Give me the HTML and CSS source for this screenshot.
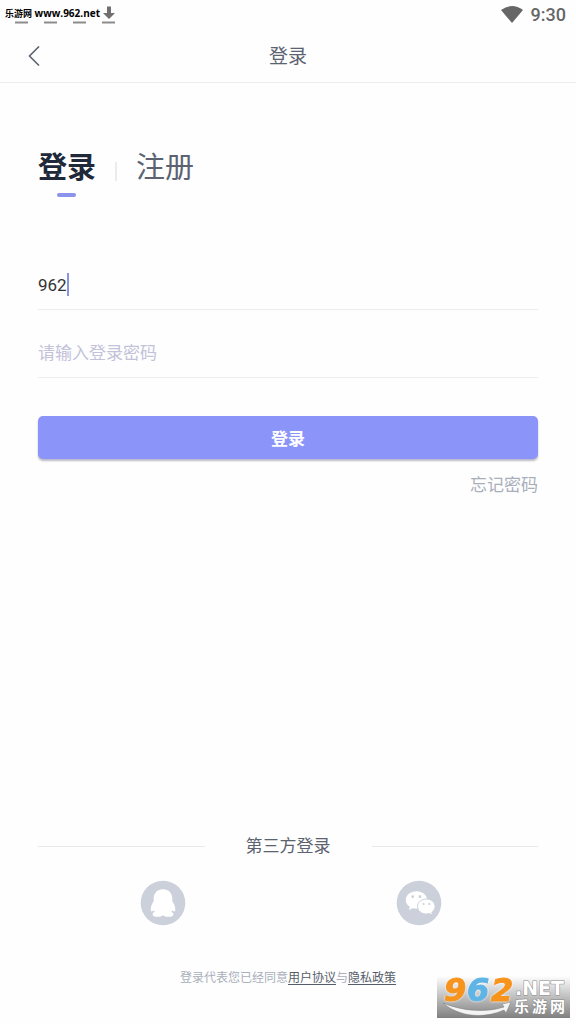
FILE: index.html
```html
<!DOCTYPE html>
<html lang="zh-CN">
<head>
<meta charset="utf-8">
<meta name="viewport" content="width=device-width, initial-scale=1">
<title>登录</title>
<link rel="stylesheet" href="styles.css">
</head>
<body>
<div class="app">
  <div class="status">
    <svg class="notices" width="104" height="20" viewBox="0 0 104 20" aria-hidden="true">
      <path d="M1 17.500H14M30 17.500H43M59 17.500H72M88 17.500H101" stroke="#8c8c8c" stroke-width="2" fill="none"/>
      <path d="M93 1.500h4v6.500h4l-6 6-6-6h4z" fill="#707070"/>
    </svg>
    <span class="site"><span class="site-name">乐游网</span> www.962.net</span>
    <svg class="wifi" width="22" height="17" viewBox="0 0 22 17" aria-hidden="true">
      <path d="M0 4Q11-4 22 4L11 17Z" fill="#666"/>
    </svg>
    <span class="clock">9:30</span>
  </div>
  <header class="header">
    <button class="back" type="button" aria-label="返回">
      <svg width="12" height="20" viewBox="0 0 12 20"><path d="M11 .5L1.500 10L11 19.500" fill="none" stroke="#5b6472" stroke-width="1.600"/></svg>
    </button>
    <h1 class="title">登录</h1>
  </header>
  <main class="main">
    <nav class="tabs">
      <button class="tab tab-active" type="button">登录</button>
      <span class="tab-divider"></span>
      <button class="tab" type="button">注册</button>
    </nav>
    <form class="form">
      <div class="field field-focus">
        <input class="input" type="text" value="962" aria-label="账号">
        <span class="caret"></span>
      </div>
      <div class="field">
        <input class="input" type="password" placeholder="请输入登录密码" aria-label="密码">
      </div>
      <button class="submit" type="button">登录</button>
      <a class="forgot" href="#">忘记密码</a>
    </form>
    <section class="third">
      <h2 class="third-title">第三方登录</h2>
      <div class="socials">
        <button class="social" type="button" aria-label="QQ">
          <svg width="46" height="46" viewBox="0 0 46 46">
            <circle cx="23" cy="23" r="22.300" fill="#cbd0da"/>
            <path d="M23 9.300c-6 0-9.300 4.200-9.300 9.500v2.500c-1.800 2.500-3 5.600-3 8.200 0 1.700.6 2.200 1.500 1.700l1.800-.8c.2.700.5 1.200.9 1.700-1.500.4-2.300 1.100-2.300 2.300 0 1.700 2 2.400 4.800 2.400 2.400 0 4.400-.5 5.600-1.600 1.200 1.100 3.200 1.600 5.600 1.600 2.800 0 4.800-.7 4.800-2.400 0-1.200-.8-1.900-2.300-2.300.4-.5.7-1 .9-1.700l1.800.8c.9.500 1.500 0 1.500-1.700 0-2.600-1.200-5.700-3-8.200v-2.500c0-5.300-3.300-9.500-9.300-9.500z" fill="#fff"/>
          </svg>
        </button>
        <button class="social" type="button" aria-label="微信">
          <svg width="46" height="46" viewBox="0 0 46 46">
            <circle cx="23" cy="23" r="22.300" fill="#cbd0da"/>
            <path d="M20.500 11.200c-6 0-10.700 3.900-10.700 8.800 0 2.900 1.500 5.300 4.100 6.900l-1.100 3.200 3.900-1.900c1.200.3 2.500.5 3.800.5 6 0 10.700-3.900 10.700-8.700s-4.700-8.800-10.700-8.800z" fill="#fff"/>
            <path d="M30.300 19c5 0 8.800 3.300 8.800 7.500 0 2.400-1.300 4.500-3.300 5.900l.8 2.800-3.200-1.600c-1 .2-2 .4-3.100.4-5 0-8.800-3.300-8.800-7.500s3.800-7.500 8.800-7.500z" fill="#fff" stroke="#cbd0da" stroke-width="1"/>
            <g fill="#cbd0da"><circle cx="16.700" cy="16.700" r="1.400"/><circle cx="24" cy="16.700" r="1.400"/><circle cx="27.600" cy="24" r="1.100"/><circle cx="33.200" cy="24" r="1.100"/></g>
          </svg>
        </button>
      </div>
      <p class="terms">登录代表您已经同意<a href="#">用户协议</a>与<a href="#">隐私政策</a></p>
    </section>
  </main>
  <div class="badge">
    <svg class="badge-art" width="133" height="42" viewBox="0 0 133 42">
      <path d="M6 27C25 35 48 37 67 31L65 28L74 26L69 37L67 34C47 43 22 41 6 27Z" fill="#f4f4f4" stroke="#777" stroke-width=".5"/>
      <g class="badge-digits">
        <text x="7" y="25" fill="#f7941e" stroke="#f7941e">9</text>
        <text x="30" y="25" fill="#5fb4e5" stroke="#5fb4e5">6</text>
        <text x="54" y="25" fill="#f7941e" stroke="#f7941e">2</text>
      </g>
      <text class="badge-net" x="78" y="19">.NET</text>
      <g class="badge-name">
        <text x="77" y="36">乐</text>
        <text x="95" y="36">游</text>
        <text x="113" y="36">网</text>
      </g>
    </svg>
  </div>
</div>
</body>
</html>
```
FILE: styles.css
```css
* {
  box-sizing: border-box;
}

body {
  margin: 0;
  background: #fefefe;
  color: #5b6270;
  font-family: Roboto, "Noto Sans CJK SC", sans-serif;
}

button {
  padding: 0;
  border: 0;
  background: none;
  color: inherit;
  font: inherit;
  cursor: pointer;
}

svg {
  display: block;
}

.app {
  position: relative;
  display: flex;
  flex-direction: column;
  min-height: 100vh;
}

.status {
  position: relative;
  display: flex;
  align-items: center;
  height: 29px;
  padding: 0 10px 0 14px;
}

.site {
  position: absolute;
  left: 5px;
  top: 6px;
  color: #000;
  font: bold 10px/14px "Open Sans", "Noto Sans CJK SC", sans-serif;
  white-space: nowrap;
}

.site-name {
  font-size: 9px;
}

.wifi {
  margin-left: auto;
}

.clock {
  margin-left: 8px;
  color: #666;
  font-size: 18px;
  font-weight: 500;
  line-height: 30px;
}

.header {
  display: grid;
  grid-template-columns: 40px 1fr 40px;
  align-items: center;
  height: 54px;
  padding: 0 14px;
  border-bottom: 1px solid #ededed;
}

.back {
  display: flex;
  align-items: center;
  justify-content: center;
  height: 40px;
}

.title {
  margin: 0;
  padding-top: 2px;
  font-size: 19px;
  font-weight: 400;
  line-height: 28px;
  text-align: center;
}

.main {
  display: flex;
  flex: 1;
  flex-direction: column;
  padding: 63px 38px 36px;
}

.tabs {
  display: flex;
  align-items: center;
  gap: 19px;
}

.tab {
  position: relative;
  color: #5b6270;
  font-size: 29px;
  line-height: 44px;
}

.tab-active {
  color: #20293a;
  font-weight: 700;
}

.tab-active::after {
  content: "";
  position: absolute;
  left: 50%;
  bottom: -7px;
  width: 19px;
  height: 4px;
  margin-left: -10px;
  border-radius: 2px;
  background: #8b93ea;
}

.tab-divider {
  width: 2px;
  height: 19px;
  margin-top: 6px;
  background: #ececee;
}

.form {
  display: flex;
  flex-direction: column;
  margin-top: 52px;
}

.field {
  position: relative;
  height: 68px;
  padding-top: 30px;
  border-bottom: 1px solid #ececec;
}

.input {
  width: 100%;
  height: 26px;
  padding: 0;
  border: 0;
  outline: 0;
  background: none;
  color: #333;
  font: 17px/26px Roboto, "Noto Sans CJK SC", sans-serif;
}

.input::placeholder {
  color: #c2c2d9;
  opacity: 1;
}

.caret {
  position: absolute;
  left: 29px;
  top: 31px;
  width: 2px;
  height: 23px;
  background: #8b93dc;
}

.submit {
  height: 43px;
  margin-top: 38px;
  border-radius: 5px;
  background: #8b95f9;
  box-shadow: 0 2px 2px rgba(60, 60, 100, 0.35);
  color: #fff;
  font-size: 17px;
  font-weight: 700;
}

.forgot {
  align-self: flex-end;
  margin-top: 13px;
  color: #a9aebb;
  font-size: 17px;
  line-height: 26px;
  text-decoration: none;
}

.third {
  margin-top: auto;
}

.third-title {
  display: flex;
  align-items: center;
  gap: 41px;
  margin: 0;
  font-size: 17px;
  font-weight: 400;
  line-height: 26px;
}

.third-title::before,
.third-title::after {
  content: "";
  flex: 1;
  height: 1px;
  background: #e9e9ec;
}

.socials {
  display: grid;
  grid-template-columns: 1fr 1fr;
  gap: 18px;
  margin-top: 21px;
  padding-left: 6px;
  justify-items: center;
}

.terms {
  margin: 42px 0 0;
  color: #a9aebb;
  font-size: 12px;
  line-height: 20px;
  text-align: center;
}

.terms a {
  color: #565d69;
  text-underline-offset: 2px;
}

.badge {
  position: absolute;
  right: 6px;
  bottom: 6px;
  background: linear-gradient(#fefefe, #808080);
}

.badge-art {
  overflow: visible;
}

.badge-digits {
  font: italic bold 32px "DejaVu Sans", sans-serif;
  stroke-width: 1px;
  filter: drop-shadow(0 0 1px #fff);
}

.badge-net,
.badge-name {
  fill: #fff;
  stroke: #888;
  stroke-width: 1px;
  paint-order: stroke;
}

.badge-net {
  font: bold 19px "DejaVu Sans", sans-serif;
}

.badge-name {
  font: bold 15px "Noto Sans CJK SC", sans-serif;
}
```
